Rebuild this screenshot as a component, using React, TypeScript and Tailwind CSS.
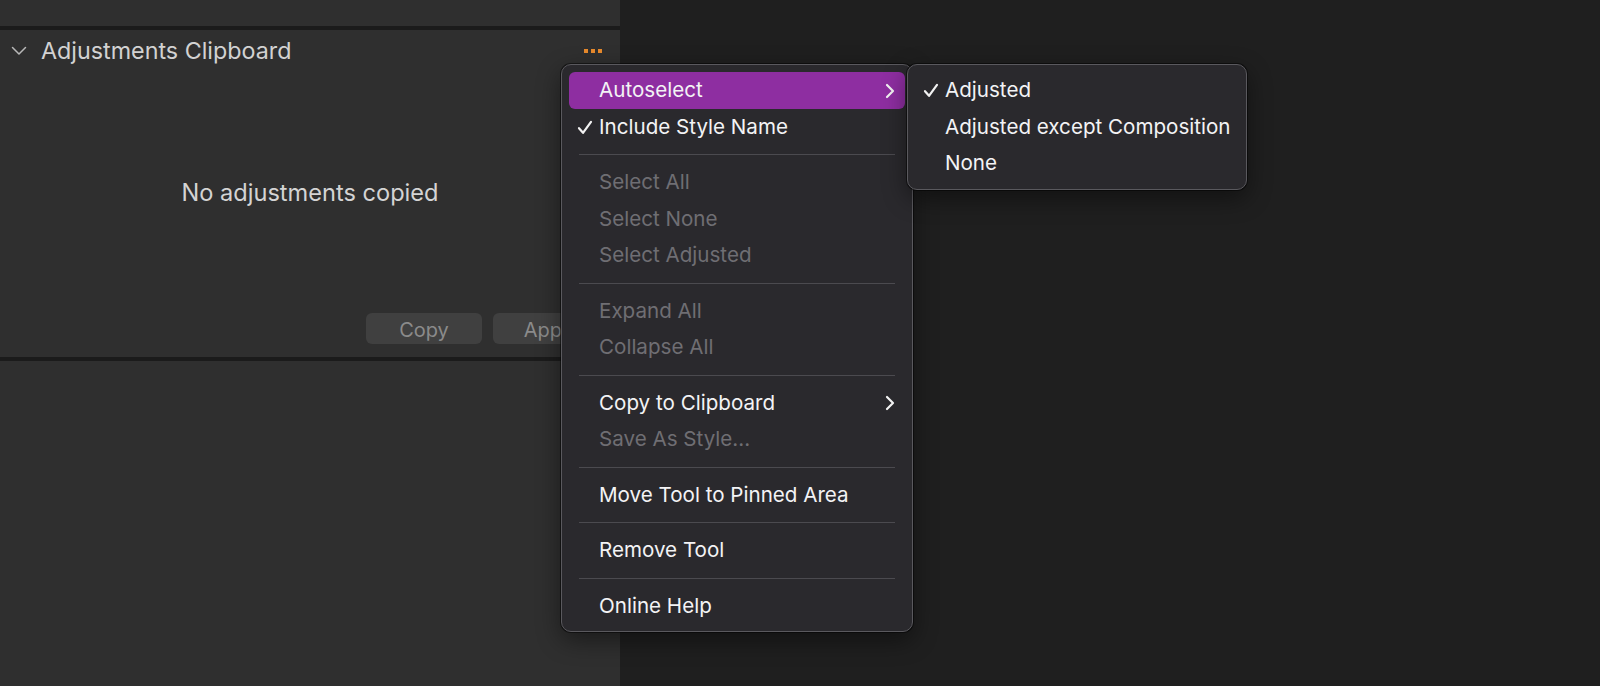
import { ReactNode } from 'react'

type Item =
  | { kind: 'item'; label: string; checked?: boolean; disabled?: boolean; submenu?: boolean; active?: boolean }
  | { kind: 'sep' }

const menuItems: Item[] = [
  { kind: 'item', label: 'Autoselect', submenu: true, active: true },
  { kind: 'item', label: 'Include Style Name', checked: true },
  { kind: 'sep' },
  { kind: 'item', label: 'Select All', disabled: true },
  { kind: 'item', label: 'Select None', disabled: true },
  { kind: 'item', label: 'Select Adjusted', disabled: true },
  { kind: 'sep' },
  { kind: 'item', label: 'Expand All', disabled: true },
  { kind: 'item', label: 'Collapse All', disabled: true },
  { kind: 'sep' },
  { kind: 'item', label: 'Copy to Clipboard', submenu: true },
  { kind: 'item', label: 'Save As Style...', disabled: true },
  { kind: 'sep' },
  { kind: 'item', label: 'Move Tool to Pinned Area' },
  { kind: 'sep' },
  { kind: 'item', label: 'Remove Tool' },
  { kind: 'sep' },
  { kind: 'item', label: 'Online Help' },
]

const subItems = [
  { label: 'Adjusted', checked: true },
  { label: 'Adjusted except Composition' },
  { label: 'None' },
]

function Check() {
  return (
    <svg width="16" height="15" viewBox="0 0 16 15" fill="none">
      <path d="M2 8.2 L6 12.8 L14 1.8" stroke="#f2f2f2" strokeWidth="2.2" strokeLinecap="round" strokeLinejoin="round" />
    </svg>
  )
}

function Chevron() {
  return (
    <svg width="10" height="16" viewBox="0 0 10 16" fill="none">
      <path d="M2 2 L8 8 L2 14" stroke="#f2f2f2" strokeWidth="2.2" strokeLinecap="round" strokeLinejoin="round" />
    </svg>
  )
}

function Row({ children, checked, active, disabled, submenu }: { children: ReactNode; checked?: boolean; active?: boolean; disabled?: boolean; submenu?: boolean }) {
  return (
    <div
      className={`flex items-center h-[36.5px] rounded-[6px] pl-[8px] pr-[10px] pt-[1px] ${active ? 'bg-[#8e2ea1]' : ''} ${disabled ? 'text-[#6f6e73]' : 'text-[#f3f3f5]'}`}
    >
      <span className="flex w-[22px] shrink-0 items-center">{checked && <Check />}</span>
      <span className="flex-1 whitespace-nowrap">{children}</span>
      {submenu && <Chevron />}
    </div>
  )
}

export default function App() {
  return (
    <div className="relative flex h-[686px] w-[1600px] overflow-hidden bg-[#1f1f1f] font-['Inter',sans-serif]">
      {/* tool panel */}
      <div className="flex w-[620px] flex-col bg-[#2f2f2f]">
        <div className="h-[26px]" />
        <div className="h-[4px] bg-[#1b1b1b]" />
        <div className="flex h-[42px] items-center pl-[11px] pr-[18px]">
          <svg width="16" height="10" viewBox="0 0 16 10" fill="none">
            <path d="M1.5 1.5 L8 8 L14.5 1.5" stroke="#b8b8b8" strokeWidth="1.5" strokeLinecap="round" strokeLinejoin="round" />
          </svg>
          <span className="ml-[14px] text-[23.3px] text-[#d2d2d2]">Adjustments Clipboard</span>
          <div className="ml-auto flex gap-[3px]">
            <span className="h-[4px] w-[4px] bg-[#e88a2c]" />
            <span className="h-[4px] w-[4px] bg-[#e88a2c]" />
            <span className="h-[4px] w-[4px] bg-[#e88a2c]" />
          </div>
        </div>
        <div className="flex flex-col">
          <div className="pt-[107px] text-center text-[23.6px] leading-[28px] text-[#d4d4d4]">No adjustments copied</div>
          <div className="mt-[106px] flex justify-end gap-[11px] pr-[11px] pb-[13px]">
            <div className="flex h-[31px] w-[116px] items-center justify-center rounded-[6px] bg-[#404040] pt-[2px] text-[20px] text-[#8b8b8b]">Copy</div>
            <div className="flex h-[31px] w-[116px] items-center justify-center rounded-[6px] bg-[#404040] pt-[2px] text-[20px] text-[#8b8b8b]">Apply</div>
          </div>
        </div>
        <div className="h-[4px] bg-[#1b1b1b]" />
        <div className="flex-1" />
      </div>
      <div className="flex-1" />

      {/* context menu */}
      <div className="absolute left-[561px] top-[64px] w-[352px] rounded-[10px] border border-[#5a595e] bg-[#2a292d] px-[7px] pt-[7px] pb-[7px] text-[20.6px] shadow-[0_0_0_1px_rgba(0,0,0,0.5),0_8px_24px_rgba(0,0,0,0.45)]">
        {menuItems.map((it, i) =>
          it.kind === 'sep' ? (
            <div key={i} className="flex h-[19px] items-center px-[10px]">
              <div className="h-px w-full bg-[#4b4a4f]" />
            </div>
          ) : (
            <Row key={i} checked={it.checked} active={it.active} disabled={it.disabled} submenu={it.submenu}>
              {it.label}
            </Row>
          )
        )}
      </div>

      {/* submenu */}
      <div className="absolute left-[907px] top-[64px] w-[340px] rounded-[10px] border border-[#5a595e] bg-[#2a292d] px-[7px] pt-[7px] pb-[7px] text-[20.6px] shadow-[0_0_0_1px_rgba(0,0,0,0.5),0_8px_24px_rgba(0,0,0,0.45)]">
        {subItems.map((s) => (
          <Row key={s.label} checked={s.checked}>
            {s.label}
          </Row>
        ))}
      </div>
    </div>
  )
}
